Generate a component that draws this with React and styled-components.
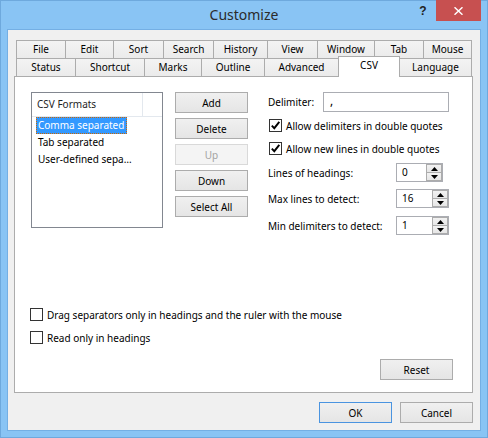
import React from 'react';
import styled, { createGlobalStyle, css } from 'styled-components';

const GlobalStyle = createGlobalStyle`
  html, body {
    margin: 0;
    padding: 0;
    background: #ffffff;
  }
  body {
    font-family: 'Noto Sans', 'Liberation Sans', sans-serif;
    font-size: 10px;
    color: #000;
  }
  * {
    box-sizing: border-box;
  }
`;

const Window = styled.div`
  width: 488px;
  height: 438px;
  background: #89c4f4;
  box-shadow: inset 0 0 0 1px #6ea9dd;
  display: flex;
  flex-direction: column;
`;

const TitleBar = styled.div`
  height: 30px;
  display: grid;
  grid-template-columns: 1fr auto 1fr;
`;

const Title = styled.div`
  grid-column: 2;
  font-size: 14px;
  line-height: 30px;
  color: #2b2b2b;
`;

const Caption = styled.div`
  display: flex;
  justify-content: flex-end;
  align-items: flex-start;
  padding-right: 7px;
`;

const HelpButton = styled.div`
  width: 26px;
  height: 21px;
  font-family: 'Liberation Sans', sans-serif;
  font-weight: bold;
  font-size: 12px;
  line-height: 22px;
  text-align: center;
  color: #222;
`;

const CloseButton = styled.div`
  width: 45px;
  height: 21px;
  background: #c75050;
  display: flex;
  align-items: center;
  justify-content: center;
`;

const Client = styled.div`
  margin: 0 8px 8px;
  flex: 1;
  background: #f0f0f0;
  box-shadow: 0 0 0 1px #74afe4;
  display: flex;
  flex-direction: column;
  padding: 10px 7px 7px 6px;
`;

const TabControl = styled.div`
  height: 353px;
  display: flex;
  flex-direction: column;
`;

const TabStrip = styled.div`
  padding-left: 2px;
  display: flex;
  flex-direction: column;
`;

const TabRow = styled.div`
  display: flex;
  height: 18px;
`;

const Tab = styled.div`
  width: ${({ $w }) => $w}px;
  flex: none;
  border-top: 1px solid #acacac;
  border-left: 1px solid #acacac;
  background: linear-gradient(#f3f3f3, #ebebeb);
  text-align: center;
  line-height: 17px;
  white-space: nowrap;
  &:last-child {
    border-right: 1px solid #acacac;
  }
  ${({ $selected }) =>
    $selected &&
    css`
      position: relative;
      z-index: 1;
      height: 21px;
      margin-top: -2px;
      margin-right: -1px;
      background: #ffffff;
      border-right: 1px solid #acacac;
    `}
`;

const Panel = styled.div`
  flex: 1;
  background: #ffffff;
  border: 1px solid #acacac;
  display: flex;
  flex-direction: column;
  padding: 15px 19px 12px 15px;
`;

const TopRow = styled.div`
  display: flex;
  align-items: flex-start;
  margin-left: 1px;
`;

const ListBox = styled.div`
  width: 132px;
  height: 136px;
  border: 1px solid #828790;
  background: #fff;
  flex: none;
`;

const ListHeader = styled.div`
  height: 24px;
  border-bottom: 1px solid #e3e8ee;
  display: flex;
`;

const HeaderCell = styled.div`
  width: 111px;
  border-right: 1px solid #e3e8ee;
  padding-left: 5px;
  line-height: 23px;
  color: #1e1e1e;
`;

const ListBody = styled.div`
  padding-left: 4px;
`;

const ListRow = styled.div`
  height: 17px;
`;

const ListItem = styled.span`
  display: inline-block;
  height: 17px;
  line-height: 15px;
  padding: 0 2px 0 1px;
  border: 1px solid transparent;
  white-space: nowrap;
  ${({ $selected }) =>
    $selected &&
    css`
      background: #3399ff;
      color: #fff;
      border: 1px dotted #cc6600;
    `}
`;

const ButtonColumn = styled.div`
  margin-left: 12px;
  display: flex;
  flex-direction: column;
  gap: 5px;
`;

const PushButton = styled.button`
  width: 73px;
  height: 21px;
  padding: 0;
  border: 1px solid ${({ $default }) => ($default ? '#4a94e0' : '#acacac')};
  background: linear-gradient(#f0f0f0, #e5e5e5);
  font: inherit;
  color: #000;
  line-height: 18px;
  &:disabled {
    color: #a3a3a3;
    border-color: #d9d9d9;
    background: #f4f4f4;
  }
`;

const OptionsColumn = styled.div`
  margin-left: 20px;
  display: flex;
  flex-direction: column;
`;

const FieldRow = styled.div`
  display: flex;
  align-items: center;
  height: ${({ $h }) => $h}px;
  margin-top: ${({ $mt }) => $mt || 0}px;
`;

const FieldLabel = styled.div`
  width: ${({ $w }) => $w}px;
  flex: none;
  white-space: nowrap;
`;

const TextBox = styled.div`
  width: 126px;
  height: 20px;
  border: 1px solid #abadb3;
  background: #fff;
  padding-left: 6px;
  line-height: 16px;
  font-size: 12px;
`;

const CheckRow = styled.div`
  display: flex;
  align-items: center;
  height: 13px;
  margin-top: ${({ $mt }) => $mt || 0}px;
  margin-left: ${({ $ml }) => $ml || 0}px;
  white-space: nowrap;
`;

const CheckBox = styled.div`
  width: 13px;
  height: 13px;
  flex: none;
  border: 1px solid #333333;
  background: #fff;
  margin-right: 4px;
  display: flex;
  align-items: center;
  justify-content: center;
`;

const SpinBox = styled.div`
  width: ${({ $w }) => $w}px;
  height: 19px;
  border: 1px solid #abadb3;
  background: #fff;
  display: flex;
`;

const SpinValue = styled.div`
  flex: 1;
  padding-left: 5px;
  line-height: 17px;
`;

const SpinButtons = styled.div`
  width: 16px;
  display: flex;
  flex-direction: column;
`;

const SpinArrow = styled.div`
  flex: 1;
  border: 1px solid #acacac;
  background: linear-gradient(#f2f2f2, #e6e6e6);
  display: flex;
  align-items: center;
  justify-content: center;
  & + & {
    border-top: none;
  }
`;

const BottomOptions = styled.div`
  margin-top: auto;
  display: flex;
  flex-direction: column;
`;

const ResetRow = styled.div`
  margin-top: 15px;
  display: flex;
  justify-content: flex-end;
`;

const DialogFooter = styled.div`
  margin-top: 9px;
  display: flex;
  justify-content: flex-end;
  gap: 8px;
`;

const CheckMark = () => (
  <svg width="11" height="11" viewBox="0 0 11 11">
    <path d="M1.8 5.6 L4.3 8.2 L9.3 1.8" fill="none" stroke="#000" strokeWidth="1.9" />
  </svg>
);

const Check = ({ checked, children, mt, ml }) => (
  <CheckRow $mt={mt} $ml={ml}>
    <CheckBox>{checked && <CheckMark />}</CheckBox>
    {children}
  </CheckRow>
);

const Arrow = ({ down }) => (
  <svg width="7" height="4" viewBox="0 0 7 4">
    <path d={down ? 'M0 0 H7 L3.5 4 Z' : 'M0 4 H7 L3.5 0 Z'} fill="#000" />
  </svg>
);

const Spin = ({ value, w }) => (
  <SpinBox $w={w}>
    <SpinValue>{value}</SpinValue>
    <SpinButtons>
      <SpinArrow>
        <Arrow />
      </SpinArrow>
      <SpinArrow>
        <Arrow down />
      </SpinArrow>
    </SpinButtons>
  </SpinBox>
);

const backTabs = [
  ['File', 49],
  ['Edit', 48],
  ['Sort', 50],
  ['Search', 50],
  ['History', 54],
  ['View', 50],
  ['Window', 57],
  ['Tab', 49],
  ['Mouse', 49],
];

const frontTabs = [
  ['Status', 59],
  ['Shortcut', 69],
  ['Marks', 57],
  ['Outline', 63],
  ['Advanced', 74],
  ['CSV', 62],
  ['Language', 73],
];

const formats = ['Comma separated', 'Tab separated', 'User-defined sepa…'];

const App = () => {
  return (
    <>
      <GlobalStyle />
      <Window>
        <TitleBar>
          <Title>Customize</Title>
          <Caption>
            <HelpButton>?</HelpButton>
            <CloseButton>
              <svg width="9" height="8" viewBox="0 0 9 8">
                <path d="M0.5 0.3 L8.5 7.7 M8.5 0.3 L0.5 7.7" stroke="#fff" strokeWidth="1.5" />
              </svg>
            </CloseButton>
          </Caption>
        </TitleBar>

        <Client>
          <TabControl>
            <TabStrip>
              <TabRow>
                {backTabs.map(([name, w]) => (
                  <Tab key={name} $w={w}>
                    {name}
                  </Tab>
                ))}
              </TabRow>
              <TabRow>
                {frontTabs.map(([name, w]) => (
                  <Tab key={name} $w={w} $selected={name === 'CSV'}>
                    {name}
                  </Tab>
                ))}
              </TabRow>
            </TabStrip>

            <Panel>
              <TopRow>
                <ListBox>
                  <ListHeader>
                    <HeaderCell>CSV Formats</HeaderCell>
                  </ListHeader>
                  <ListBody>
                    {formats.map((f, i) => (
                      <ListRow key={f}>
                        <ListItem $selected={i === 0}>{f}</ListItem>
                      </ListRow>
                    ))}
                  </ListBody>
                </ListBox>

                <ButtonColumn>
                  <PushButton>Add</PushButton>
                  <PushButton>Delete</PushButton>
                  <PushButton disabled>Up</PushButton>
                  <PushButton>Down</PushButton>
                  <PushButton>Select All</PushButton>
                </ButtonColumn>

                <OptionsColumn>
                  <FieldRow $h={20}>
                    <FieldLabel $w={55}>Delimiter:</FieldLabel>
                    <TextBox>,</TextBox>
                  </FieldRow>
                  <Check checked mt={7} ml={1}>
                    Allow delimiters in double quotes
                  </Check>
                  <Check checked mt={10} ml={1}>
                    Allow new lines in double quotes
                  </Check>
                  <FieldRow $h={19} $mt={8}>
                    <FieldLabel $w={128}>Lines of headings:</FieldLabel>
                    <Spin value="0" w={47} />
                  </FieldRow>
                  <FieldRow $h={19} $mt={7}>
                    <FieldLabel $w={128}>Max lines to detect:</FieldLabel>
                    <Spin value="16" w={53} />
                  </FieldRow>
                  <FieldRow $h={19} $mt={8}>
                    <FieldLabel $w={128}>Min delimiters to detect:</FieldLabel>
                    <Spin value="1" w={53} />
                  </FieldRow>
                </OptionsColumn>
              </TopRow>

              <BottomOptions>
                <Check>Drag separators only in headings and the ruler with the mouse</Check>
                <Check mt={10}>Read only in headings</Check>
              </BottomOptions>

              <ResetRow>
                <PushButton>Reset</PushButton>
              </ResetRow>
            </Panel>
          </TabControl>

          <DialogFooter>
            <PushButton $default>OK</PushButton>
            <PushButton>Cancel</PushButton>
          </DialogFooter>
        </Client>
      </Window>
    </>
  );
};

export default App;
